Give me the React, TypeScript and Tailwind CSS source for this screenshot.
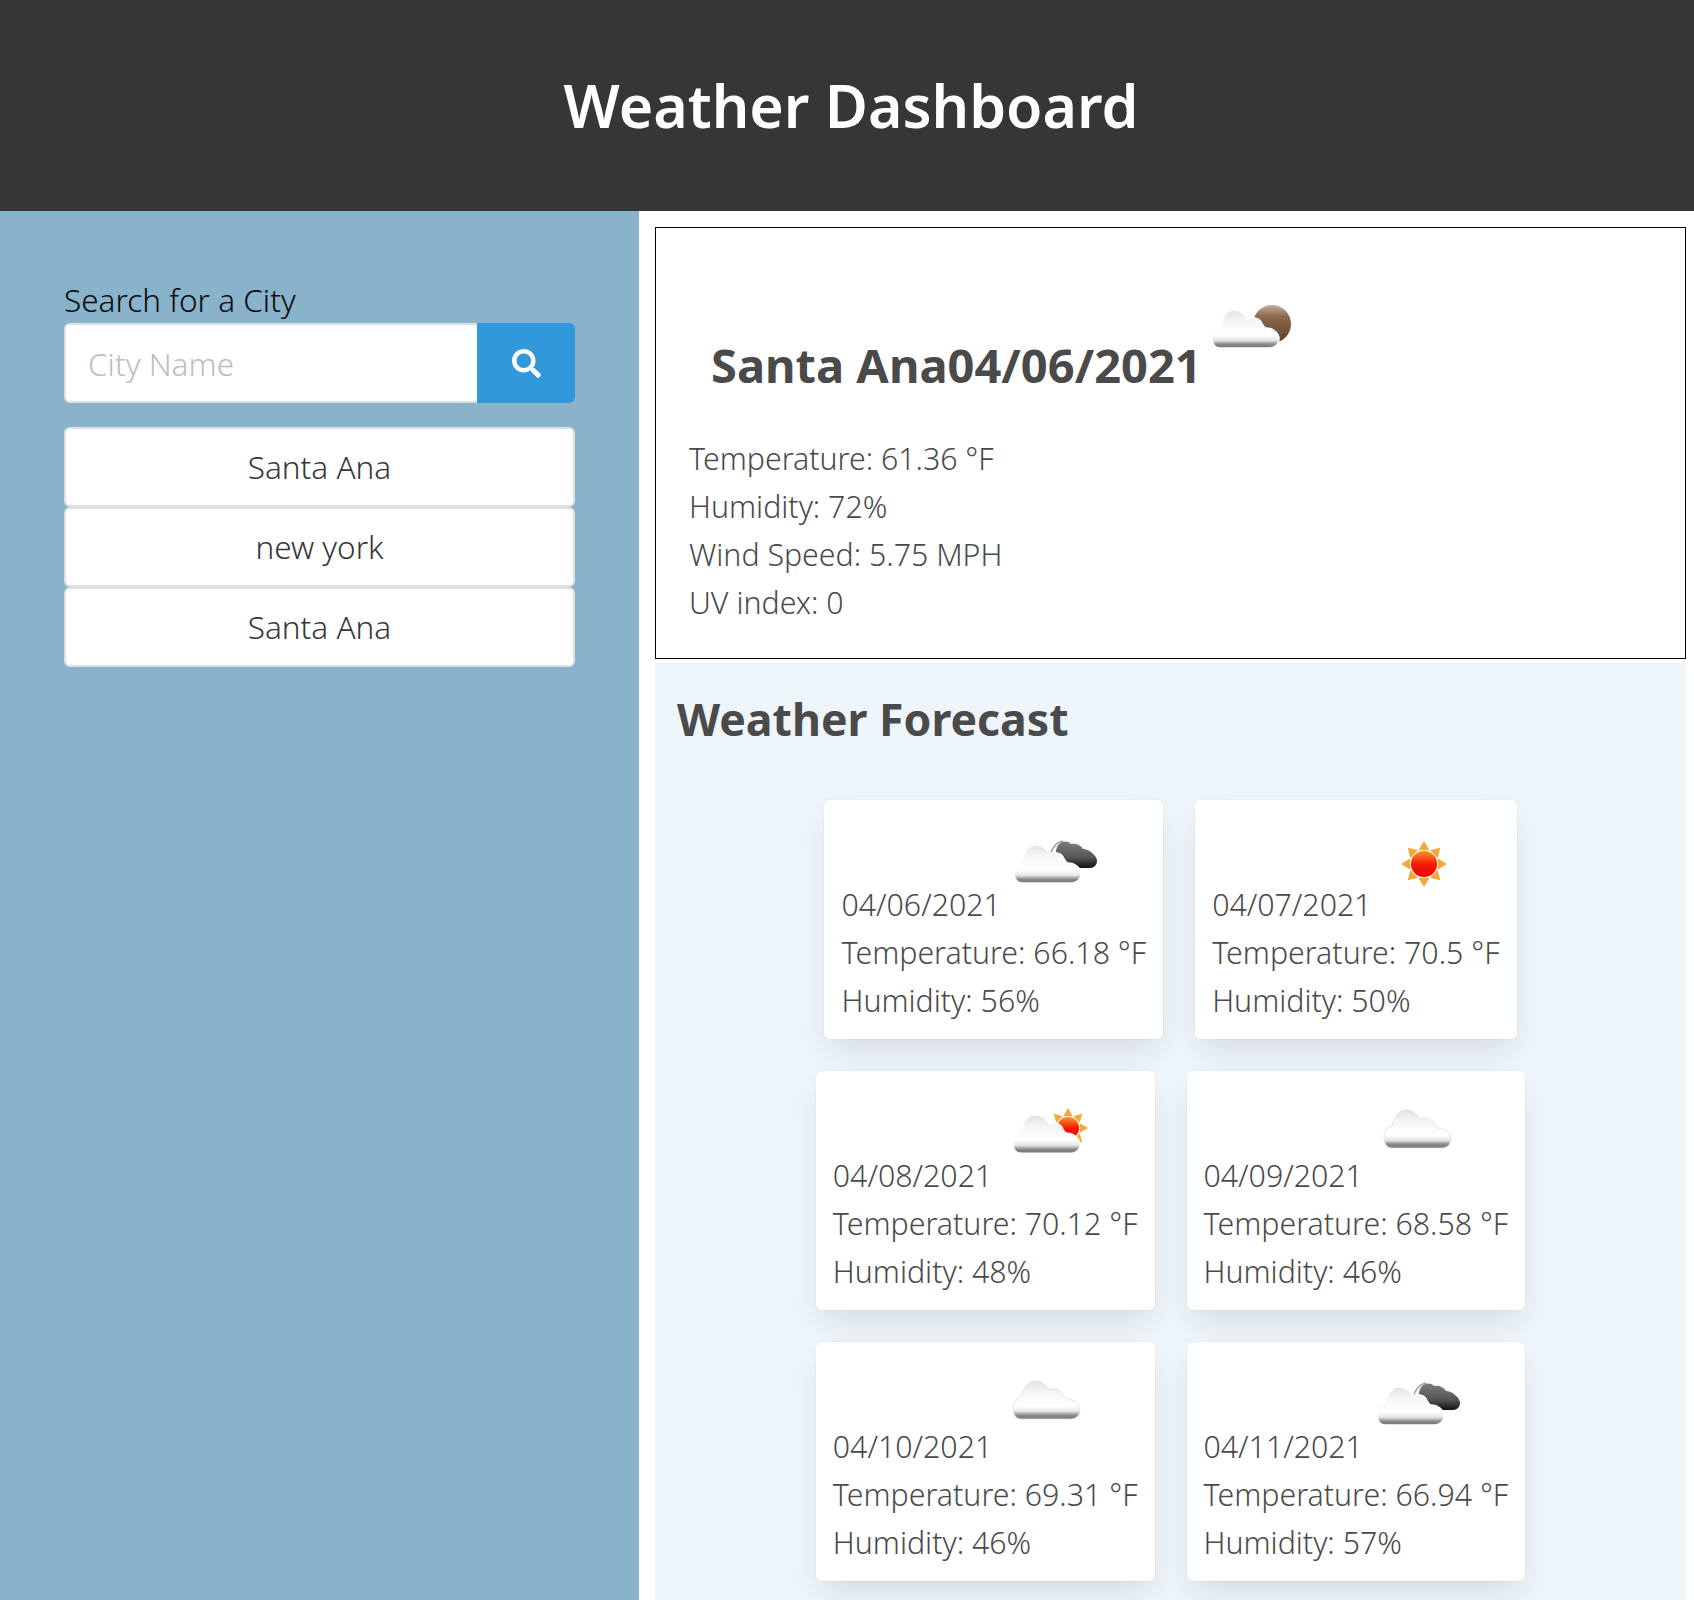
import { FaSearch } from 'react-icons/fa';

type IconKind = 'clouds' | 'broken' | 'sun' | 'few' | 'night';

const forecastRows = [
  [
    { date: '04/06/2021', temp: '66.18', humidity: '56', icon: 'broken' as IconKind },
    { date: '04/07/2021', temp: '70.5', humidity: '50', icon: 'sun' as IconKind },
  ],
  [
    { date: '04/08/2021', temp: '70.12', humidity: '48', icon: 'few' as IconKind },
    { date: '04/09/2021', temp: '68.58', humidity: '46', icon: 'clouds' as IconKind },
  ],
  [
    { date: '04/10/2021', temp: '69.31', humidity: '46', icon: 'clouds' as IconKind },
    { date: '04/11/2021', temp: '66.94', humidity: '57', icon: 'broken' as IconKind },
  ],
];

const CLOUD_PATH =
  'M8 38C2 38 0 32 0 27C0 21 4 17 8 16C10 6 16 0 22 0C29 0 33 4 36 9C40 7 48 7 50 14C52 17 53 18 54 18C61 18 67 23 67 29C67 34 63 38 58 38Z';

function Sun({ cx, cy, r, ray }: { cx: number; cy: number; r: number; ray: number }) {
  const rays = [0, 45, 90, 135, 180, 225, 270, 315];
  return (
    <g>
      {rays.map((a) => (
        <polygon
          key={a}
          points={`${cx - r * 0.42},${cy - r - 1} ${cx + r * 0.42},${cy - r - 1} ${cx},${cy - ray}`}
          fill="#f5a838"
          transform={`rotate(${a} ${cx} ${cy})`}
        />
      ))}
      <circle cx={cx} cy={cy} r={r + 1} fill="#fde3c0" />
      <circle cx={cx} cy={cy} r={r} fill="url(#sunFill)" />
    </g>
  );
}

function WeatherIcon({ kind }: { kind: IconKind }) {
  return (
    <svg width="100" height="64" viewBox="0 0 100 64" className="block overflow-visible blur-[0.6px]">
      <defs>
        <linearGradient id="cloudFill" x1="0" y1="0" x2="0" y2="1">
          <stop offset="0" stopColor="#e2e2e2" />
          <stop offset="0.3" stopColor="#f6f6f6" />
          <stop offset="0.66" stopColor="#ffffff" />
          <stop offset="0.8" stopColor="#e4e4e4" />
          <stop offset="0.9" stopColor="#8a8a8a" />
          <stop offset="1" stopColor="#767676" />
        </linearGradient>
        <linearGradient id="darkFill" x1="0" y1="0" x2="0" y2="1">
          <stop offset="0" stopColor="#7c7c7c" />
          <stop offset="0.6" stopColor="#555555" />
          <stop offset="1" stopColor="#111111" />
        </linearGradient>
        <linearGradient id="sunFill" x1="0" y1="0" x2="0" y2="1">
          <stop offset="0" stopColor="#f79a2c" />
          <stop offset="0.5" stopColor="#f61808" />
          <stop offset="1" stopColor="#f20000" />
        </linearGradient>
        <linearGradient id="moonFill" x1="0" y1="0" x2="0" y2="1">
          <stop offset="0" stopColor="#c4ae98" />
          <stop offset="0.3" stopColor="#8a6a4e" />
          <stop offset="1" stopColor="#5f4129" />
        </linearGradient>
      </defs>
      {kind === 'clouds' && (
        <path d={CLOUD_PATH} fill="url(#cloudFill)" stroke="#dedede" strokeWidth="0.8" transform="translate(16 23)" />
      )}
      {kind === 'sun' && <Sun cx={48} cy={48} r={13} ray={23} />}
      {kind === 'few' && (
        <g>
          <Sun cx={71} cy={41} r={11} ray={20} />
          <path d={CLOUD_PATH} fill="url(#cloudFill)" stroke="#ffffff" strokeWidth="1" transform="translate(16 28)" />
        </g>
      )}
      {kind === 'broken' && (
        <g>
          <path d="M46 38C47 31 52 26 58 25" fill="none" stroke="#9a9a9a" strokeWidth="1.5" />
          <path
            d="M54 50C50 44 50 36 52 31C55 25 62 24 66 28C70 27 76 29 78 33C81 33 84 34 87 37C90 39 92 42 92 45C92 49 89 52 85 52L62 52C59 52 56 52 54 50Z"
            fill="url(#darkFill)"
          />
          <path d={CLOUD_PATH} fill="url(#cloudFill)" stroke="#ffffff" strokeWidth="1.5" transform="translate(9 29)" />
        </g>
      )}
      {kind === 'night' && (
        <g>
          <circle cx={70} cy={28} r={19} fill="url(#moonFill)" />
          <path d={CLOUD_PATH} fill="url(#cloudFill)" stroke="#ffffff" strokeWidth="1.5" transform="translate(10 14)" />
        </g>
      )}
    </svg>
  );
}

function ForecastCard({ date, temp, humidity, icon }: { date: string; temp: string; humidity: string; icon: IconKind }) {
  return (
    <div className="bg-white rounded-md pt-4 pb-[14px] px-[17px] shadow-[0_16px_32px_-4px_rgba(10,10,10,0.1),0_0_0_1px_rgba(10,10,10,0.02)]">
      <div className="h-[65px] pl-[164px]">
        <WeatherIcon kind={icon} />
      </div>
      <p>{date}</p>
      <p>Temperature: {temp} °F</p>
      <p>Humidity: {humidity}%</p>
    </div>
  );
}

export default function App() {
  return (
    <div className="min-h-[1600px] bg-white font-['Noto_Sans',sans-serif] text-[30.3px] leading-[48px] font-light text-[#4a4a4a]">
      <header className="h-[211px] bg-[#363636] flex items-center justify-center">
        <h1 className="ml-2 text-[59px] font-semibold text-white leading-none">Weather Dashboard</h1>
      </header>
      <div className="flex">
        <aside className="w-[639px] h-[1389px] shrink-0 bg-[#88b3ca] pt-[65px] px-16">
          <label className="block text-[#0a0a0a] text-[31.5px] leading-[47px]">Search for a City</label>
          <div className="flex w-[511px]">
            <input
              placeholder="City Name"
              className="w-[413px] h-20 bg-white rounded-l-md px-[22px] text-[31.5px] border-2 border-[#e0e0e0] border-r-0 outline-none placeholder:text-[#bdbdbd]"
            />
            <button className="w-[98px] h-20 bg-[#3298dc] rounded-r-md flex items-center justify-center text-white">
              <FaSearch size={29} />
            </button>
          </div>
          <div className="flex flex-col mt-[24px] w-[511px]">
            {['Santa Ana', 'new york', 'Santa Ana'].map((city, i) => (
              <button
                key={i}
                className="h-20 bg-white rounded-md border-2 border-[#e0e0e0] text-[#363636] text-[31.5px] text-center"
              >
                {city}
              </button>
            ))}
          </div>
        </aside>
        <main className="flex-1 pt-4 pl-4 pr-2">
          <section className="h-[432px] border border-black pt-[68px] pl-[33px]">
            <div className="flex items-start">
              <h2 className="mt-[45px] ml-[22px] text-[47px] font-bold leading-[48px]">Santa Ana04/06/2021</h2>
              <WeatherIcon kind="night" />
            </div>
            <div className="mt-[46px]">
              <p>Temperature: 61.36 °F</p>
              <p>Humidity: 72%</p>
              <p>Wind Speed: 5.75 MPH</p>
              <p>UV index: 0</p>
            </div>
          </section>
          <section className="mt-1 h-[937px] bg-[#eef5fb] pt-[27px]">
            <h2 className="pl-[22px] text-[44.6px] font-bold leading-[58px]">Weather Forecast</h2>
            <div className="mt-[52px] flex flex-col gap-8">
              {forecastRows.map((row, i) => (
                <div key={i} className="flex justify-center gap-8">
                  {row.map((day) => (
                    <ForecastCard key={day.date} {...day} />
                  ))}
                </div>
              ))}
            </div>
          </section>
        </main>
      </div>
    </div>
  );
}
